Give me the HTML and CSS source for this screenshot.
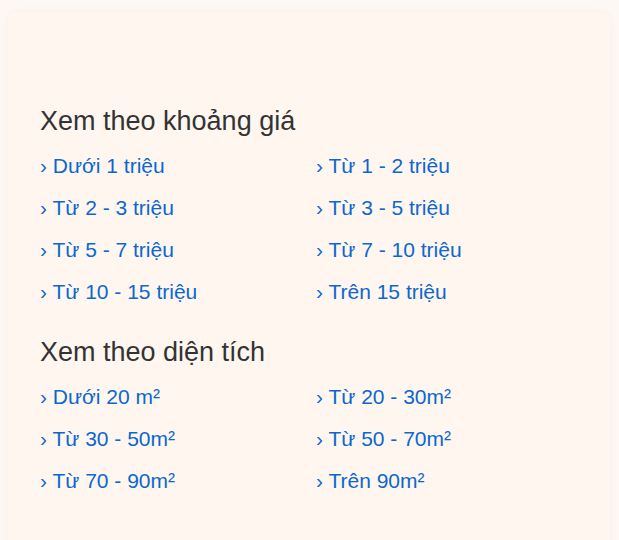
FILE: index.html
```html
<!DOCTYPE html>
<html lang="vi">
<head>
<meta charset="utf-8">
<link rel="stylesheet" href="styles.css">
</head>
<body>
<div class="card">
  <section class="group">
    <h3 class="title">Xem theo khoảng giá</h3>
    <ul class="links">
      <li><a href="#">› Dưới 1 triệu</a></li>
      <li><a href="#">› Từ 1 - 2 triệu</a></li>
      <li><a href="#">› Từ 2 - 3 triệu</a></li>
      <li><a href="#">› Từ 3 - 5 triệu</a></li>
      <li><a href="#">› Từ 5 - 7 triệu</a></li>
      <li><a href="#">› Từ 7 - 10 triệu</a></li>
      <li><a href="#">› Từ 10 - 15 triệu</a></li>
      <li><a href="#">› Trên 15 triệu</a></li>
    </ul>
  </section>
  <section class="group">
    <h3 class="title">Xem theo diện tích</h3>
    <ul class="links">
      <li><a href="#">› Dưới 20 m²</a></li>
      <li><a href="#">› Từ 20 - 30m²</a></li>
      <li><a href="#">› Từ 30 - 50m²</a></li>
      <li><a href="#">› Từ 50 - 70m²</a></li>
      <li><a href="#">› Từ 70 - 90m²</a></li>
      <li><a href="#">› Trên 90m²</a></li>
    </ul>
  </section>
</div>
</body>
</html>
```
FILE: styles.css
```css
html, body {
  margin: 0;
  padding: 0;
  background: #fdf8f4;
  font-family: "Liberation Sans", Arial, sans-serif;
}
body {
  padding: 12px 9px 0 8px;
  height: 540px;
  box-sizing: border-box;
  overflow: hidden;
}
.card {
  background: #fff6f0;
  border-radius: 8px;
  box-shadow: 0 0 8px rgba(0, 0, 0, 0.04);
  padding: 93px 32px 40px 32px;
  min-height: 600px;
}
.group + .group {
  margin-top: 23px;
}
.title {
  margin: 0 0 8px 0;
  font-size: 27px;
  font-weight: normal;
  color: #333;
  line-height: 32px;
}
.links {
  list-style: none;
  margin: 0;
  padding: 0;
  display: grid;
  grid-template-columns: 276px 1fr;
  row-gap: 0;
}
.links li {
  line-height: 42px;
  font-size: 21px;
}
.links a {
  color: #0b68cf;
  text-decoration: none;
}
```
